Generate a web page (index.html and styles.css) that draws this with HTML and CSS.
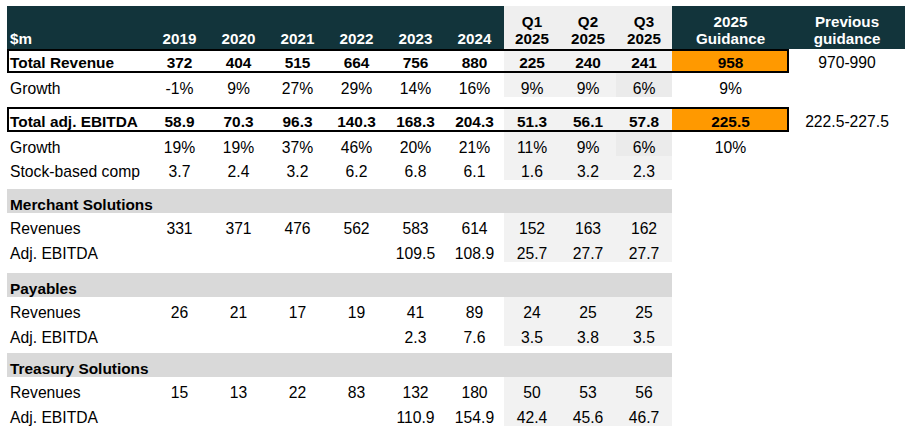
FILE: index.html
```html
<!DOCTYPE html>
<html lang="en">
<head>
<meta charset="utf-8">
<title>Financial summary</title>
<link rel="stylesheet" href="styles.css">
</head>
<body>
<div class="page">
<table class="fin">
  <colgroup>
    <col class="c-label">
    <col class="c-yr"><col class="c-yr"><col class="c-yr"><col class="c-yr"><col class="c-yr"><col class="c-yr">
    <col class="c-q"><col class="c-q"><col class="c-q">
    <col class="c-guid"><col class="c-prev">
  </colgroup>
  <thead>
    <tr class="head">
      <th class="hd lbl">$m</th>
      <th class="hd">2019</th><th class="hd">2020</th><th class="hd">2021</th><th class="hd">2022</th><th class="hd">2023</th><th class="hd">2024</th>
      <th class="hq">Q1<br>2025</th><th class="hq">Q2<br>2025</th><th class="hq">Q3<br>2025</th>
      <th class="hd">2025<br>Guidance</th><th class="hd">Previous<br>guidance</th>
    </tr>
  </thead>
  <tbody>
    <tr class="row box b">
      <td class="lbl bl">Total Revenue</td>
      <td>372</td><td>404</td><td>515</td><td>664</td><td>756</td><td>880</td>
      <td class="q">225</td><td class="q">240</td><td class="q">241</td>
      <td class="guid">958</td><td class="prev">970-990</td>
    </tr>
    <tr class="row">
      <td class="lbl">Growth</td>
      <td>-1%</td><td>9%</td><td>27%</td><td>29%</td><td>14%</td><td>16%</td>
      <td class="q">9%</td><td class="q">9%</td><td class="q qd">6%</td>
      <td>9%</td><td></td>
    </tr>
    <tr class="sp sp10"><td colspan="12"></td></tr>
    <tr class="row box b tall">
      <td class="lbl bl">Total adj. EBITDA</td>
      <td>58.9</td><td>70.3</td><td>96.3</td><td>140.3</td><td>168.3</td><td>204.3</td>
      <td class="q">51.3</td><td class="q">56.1</td><td class="q">57.8</td>
      <td class="guid">225.5</td><td class="prev">222.5-227.5</td>
    </tr>
    <tr class="row">
      <td class="lbl">Growth</td>
      <td>19%</td><td>19%</td><td>37%</td><td>46%</td><td>20%</td><td>21%</td>
      <td class="q">11%</td><td class="q">9%</td><td class="q qd">6%</td>
      <td>10%</td><td></td>
    </tr>
    <tr class="row">
      <td class="lbl">Stock-based comp</td>
      <td>3.7</td><td>2.4</td><td>3.2</td><td>6.2</td><td>6.8</td><td>6.1</td>
      <td class="q">1.6</td><td class="q">3.2</td><td class="q">2.3</td>
      <td></td><td></td>
    </tr>
    <tr class="sp sp9"><td colspan="12"></td></tr>
    <tr class="row sec">
      <td class="lbl" colspan="10">Merchant Solutions</td><td></td><td></td>
    </tr>
    <tr class="row">
      <td class="lbl">Revenues</td>
      <td>331</td><td>371</td><td>476</td><td>562</td><td>583</td><td>614</td>
      <td class="q">152</td><td class="q">163</td><td class="q">162</td>
      <td></td><td></td>
    </tr>
    <tr class="row tall">
      <td class="lbl">Adj. EBITDA</td>
      <td></td><td></td><td></td><td></td><td>109.5</td><td>108.9</td>
      <td class="q">25.7</td><td class="q">27.7</td><td class="q">27.7</td>
      <td></td><td></td>
    </tr>
    <tr class="sp sp11"><td colspan="12"></td></tr>
    <tr class="row sec">
      <td class="lbl" colspan="10">Payables</td><td></td><td></td>
    </tr>
    <tr class="row">
      <td class="lbl">Revenues</td>
      <td>26</td><td>21</td><td>17</td><td>19</td><td>41</td><td>89</td>
      <td class="q">24</td><td class="q">25</td><td class="q">25</td>
      <td></td><td></td>
    </tr>
    <tr class="row tall">
      <td class="lbl">Adj. EBITDA</td>
      <td></td><td></td><td></td><td></td><td>2.3</td><td>7.6</td>
      <td class="q">3.5</td><td class="q">3.8</td><td class="q">3.5</td>
      <td></td><td></td>
    </tr>
    <tr class="sp sp7"><td colspan="12"></td></tr>
    <tr class="row sec">
      <td class="lbl" colspan="10">Treasury Solutions</td><td></td><td></td>
    </tr>
    <tr class="row">
      <td class="lbl">Revenues</td>
      <td>15</td><td>13</td><td>22</td><td>83</td><td>132</td><td>180</td>
      <td class="q">50</td><td class="q">53</td><td class="q">56</td>
      <td></td><td></td>
    </tr>
    <tr class="row tall">
      <td class="lbl">Adj. EBITDA</td>
      <td></td><td></td><td></td><td></td><td>110.9</td><td>154.9</td>
      <td class="q">42.4</td><td class="q">45.6</td><td class="q">46.7</td>
      <td></td><td></td>
    </tr>
  </tbody>
</table>
</div>
</body>
</html>
```

FILE: styles.css
```css
html, body {
  margin: 0;
  padding: 0;
  background: #ffffff;
}

.page {
  padding: 6px 0 0 7px;
}

.fin {
  table-layout: fixed;
  width: 898px;
  border-collapse: separate;
  border-spacing: 0;
  font-family: "Liberation Sans", Arial, Helvetica, sans-serif;
  font-size: 15.7px;
  color: #000000;
}

.c-label { width: 143px; }
.c-yr { width: 59px; }
.c-q { width: 56px; }
.c-guid { width: 117px; }
.c-prev { width: 116px; }

.fin th,
.fin td {
  padding: 0;
  text-align: center;
  vertical-align: bottom;
  line-height: 17px;
  white-space: nowrap;
}

.head { height: 43px; }

.fin th {
  font-weight: bold;
  font-size: 15.2px;
  padding-bottom: 2px;
}

.hd {
  background: #12343b;
  color: #ffffff;
}

.hq {
  background: #efefef;
  color: #000000;
}

.fin .lbl {
  text-align: left;
  padding-left: 3px;
}

.row { height: 24px; }
.row.tall { height: 25px; }

.b td {
  font-weight: bold;
  font-size: 15.4px;
}

.b td.prev {
  font-weight: normal;
  font-size: 15.7px;
}

.box td {
  box-shadow: inset 0 2px 0 #000000, inset 0 -2px 0 #000000;
  padding-bottom: 2px;
}

.box td.bl {
  box-shadow: inset 2px 0 0 #000000, inset 0 2px 0 #000000, inset 0 -2px 0 #000000;
}

.box td.guid {
  background: #ff9900;
  box-shadow: inset -2px 0 0 #000000, inset 0 2px 0 #000000, inset 0 -2px 0 #000000;
}

.box td.prev {
  box-shadow: none;
  padding-bottom: 2px;
}

.q { background: #f2f2f2; }
.q.qd { background: #ebebeb; }

.sec td.lbl {
  background: #d9d9d9;
  font-weight: bold;
  font-size: 15.4px;
}

.sp td { padding: 0; line-height: 0; }
.sp7 { height: 7px; }
.sp9 { height: 9px; }
.sp10 { height: 10px; }
.sp11 { height: 11px; }
```
